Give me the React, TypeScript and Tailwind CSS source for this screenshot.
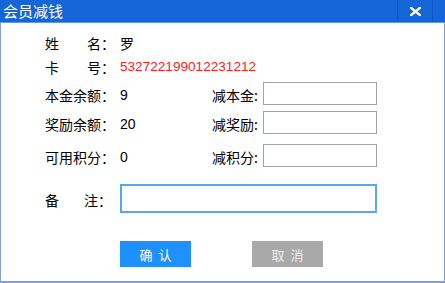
import React from 'react';

const cjk = { fontFamily: '"Noto Sans CJK SC", "Liberation Sans", sans-serif' };
const num = { fontFamily: '"Liberation Sans", "Noto Sans CJK SC", sans-serif' };

// 两字标签，左右撑开
const SpreadLabel: React.FC<{ a: string; b: string }> = ({ a, b }) => (
  <div className="flex w-[70px] shrink-0">
    <span>{a}</span>
    <span className="flex-1" />
    <span>{b}：</span>
  </div>
);

const Field: React.FC<{ label: string; value: string; sub: string; mt: string }> = ({ label, value, sub, mt }) => (
  <div className={`flex items-center h-[23px] ${mt}`}>
    <div className="w-[70px] shrink-0 pt-[2px] whitespace-nowrap">{label}：</div>
    <div className="w-[92px] shrink-0 ml-[5px] pt-[2px]" style={num}>{value}</div>
    <div className="w-[51px] shrink-0 pt-[2px] whitespace-nowrap">{sub}:</div>
    <input className="w-[114px] h-[23px] border border-[#a3a3a3] bg-white outline-none" />
  </div>
);

export default function App() {
  return (
    <div className="w-[445px] h-[283px] bg-white flex flex-col border-x border-b-[2px] border-[#7ea3d3] text-[14px] text-black leading-none" style={cjk}>
      {/* 标题栏 */}
      <div className="h-[23px] -mx-px bg-[#1565d8] border-b border-[#5a9ae8] flex items-center justify-between shrink-0">
        <span className="text-white text-[15px] pl-[3px] pb-[1px]">会员减钱</span>
        <div className="flex h-full">
          <div className="w-[36px] h-full border-x border-[#0f56c2] flex items-center justify-center">
            <svg width="11" height="9" viewBox="0 0 11 9">
              <path d="M1 0.8 L10 8.2 M10 0.8 L1 8.2" stroke="white" strokeWidth="2.4" strokeLinecap="square" />
            </svg>
          </div>
          <div className="w-[12px]" />
        </div>
      </div>

      <div className="flex flex-col pl-[44px]">
        <div className="flex items-center h-[20px] mt-[10px]">
          <SpreadLabel a="姓" b="名" />
          <span className="ml-[5px]">罗</span>
        </div>
        <div className="flex items-center h-[20px] mt-[4px]">
          <SpreadLabel a="卡" b="号" />
          <span className="ml-[5px] text-[#ff1a1a] text-[13.6px]" style={num}>532722199012231212</span>
        </div>

        <Field label="本金余额" value="9" sub="减本金" mt="mt-[5px]" />
        <Field label="奖励余额" value="20" sub="减奖励" mt="mt-[6px]" />
        <Field label="可用积分" value="0" sub="减积分" mt="mt-[10px]" />

        <div className="flex items-center h-[29px] mt-[17px]">
          <div className="flex w-[70px] shrink-0 pt-[2px]">
            <span>备</span>
            <span className="flex-1" />
            <span className="mr-[3px]">注：</span>
          </div>
          <input className="ml-[5px] w-[257px] h-[29px] border-2 border-[#5aa7ec] bg-white outline-none" />
        </div>

        <div className="flex mt-[28px] ml-[75px] gap-[61px]">
          <button className="w-[71px] h-[26px] bg-[#1e90ff] text-white text-[13px] tracking-[6px] pl-[6px]">确认</button>
          <button className="w-[71px] h-[26px] bg-[#a9a9a9] text-[#eeeeee] text-[13px] tracking-[6px] pl-[6px]">取消</button>
        </div>
      </div>
    </div>
  );
}
